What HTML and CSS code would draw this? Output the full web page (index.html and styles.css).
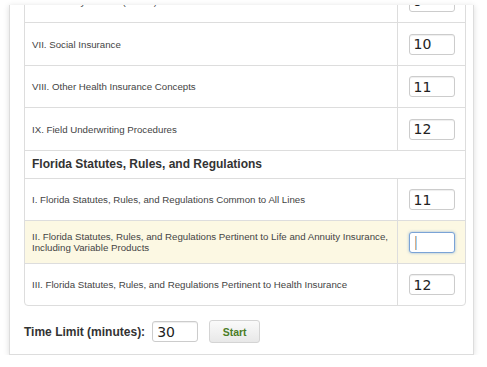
FILE: index.html
```html
<!DOCTYPE html>
<html lang="en">
  <head>
    <meta charset="UTF-8">
    <title>Practice Exam Setup</title>
    <link rel="stylesheet" href="styles.css">
  </head>
  <body>
    <div class="card">
      <div class="topics">
        <div class="row first">
          <div class="name">VI. Disability Income (Health)</div>
          <div class="val"><input class="num" type="text" value="9"></div>
        </div>
        <div class="row tall">
          <div class="name">VII. Social Insurance</div>
          <div class="val"><input class="num" type="text" value="10"></div>
        </div>
        <div class="row">
          <div class="name">VIII. Other Health Insurance Concepts</div>
          <div class="val"><input class="num" type="text" value="11"></div>
        </div>
        <div class="row tall">
          <div class="name">IX. Field Underwriting Procedures</div>
          <div class="val"><input class="num" type="text" value="12"></div>
        </div>
        <div class="row section">
          <div class="name">Florida Statutes, Rules, and Regulations</div>
        </div>
        <div class="row">
          <div class="name">I. Florida Statutes, Rules, and Regulations Common to All Lines</div>
          <div class="val"><input class="num" type="text" value="11"></div>
        </div>
        <div class="row tall active">
          <div class="name">II. Florida Statutes, Rules, and Regulations Pertinent to Life and Annuity Insurance, Including Variable Products</div>
          <div class="val"><input class="num focus" type="text" value="|"></div>
        </div>
        <div class="row">
          <div class="name">III. Florida Statutes, Rules, and Regulations Pertinent to Health Insurance</div>
          <div class="val"><input class="num" type="text" value="12"></div>
        </div>
      </div>
      <div class="controls">
        <label for="minutes" class="limit">Time Limit (minutes):</label>
        <input id="minutes" class="num" type="text" value="30">
        <button class="start">Start</button>
      </div>
    </div>
  </body>
</html>
```

FILE: styles.css
```css
body {
    margin: 0;
    background-color: #fff;
    font-family: "Liberation Sans", Arial, sans-serif;
    color: #333;
}
.card {
    margin: 5px 13px 0 9px;
    width: 465px;
    box-sizing: border-box;
    padding: 0 7px 11px 14px;
    border: 1px solid #ddd;
    border-top: none;
    background-color: #fff;
    box-shadow: 0 1px 6px rgba(0, 0, 0, 0.14);
    overflow: hidden;
}
.topics {
    margin-top: -26px;
    border: 1px solid #ddd;
    border-radius: 4px;
    overflow: hidden;
}
.row {
    display: flex;
    height: 42px;
    box-sizing: border-box;
    border-top: 1px solid #ddd;
}
.row.first {
    border-top: none;
}
.row.tall {
    height: 43px;
}
.row.section {
    height: 28px;
}
.row.active {
    background-color: #fcf8e3;
}
.name {
    flex: 1;
    display: flex;
    align-items: center;
    padding: 0 7px;
    font-size: 9.7px;
    line-height: 11px;
    color: #444;
}
.section .name {
    font-size: 12px;
    font-weight: bold;
    color: #333;
}
.val {
    width: 67px;
    border-left: 1px solid #ddd;
    display: flex;
    align-items: center;
    justify-content: center;
}
.num {
    width: 46px;
    height: 21px;
    box-sizing: border-box;
    padding: 0 4px;
    border: 1px solid #ccc;
    border-radius: 3px;
    box-shadow: inset 0 1px 1px rgba(0, 0, 0, 0.07);
    font-family: "DejaVu Sans", sans-serif;
    font-size: 14px;
    color: #222;
    background-color: #fff;
    outline: none;
}
.num.focus {
    border-color: #7aa3d6;
    box-shadow: 0 0 3px rgba(82, 140, 210, 0.6);
    font-weight: 200;
    color: #444;
}
.controls {
    display: flex;
    align-items: center;
    margin-top: 14px;
    height: 23px;
}
.limit {
    font-size: 12px;
    font-weight: bold;
    color: #333;
    margin-right: 7px;
}
.start {
    margin-left: 11px;
    width: 51px;
    height: 23px;
    border: 1px solid #d4d4d4;
    border-radius: 3px;
    background: linear-gradient(#fafafa, #e8e8e8);
    font-family: "Liberation Sans", Arial, sans-serif;
    font-size: 10.5px;
    font-weight: bold;
    color: #4a7d27;
}
```
